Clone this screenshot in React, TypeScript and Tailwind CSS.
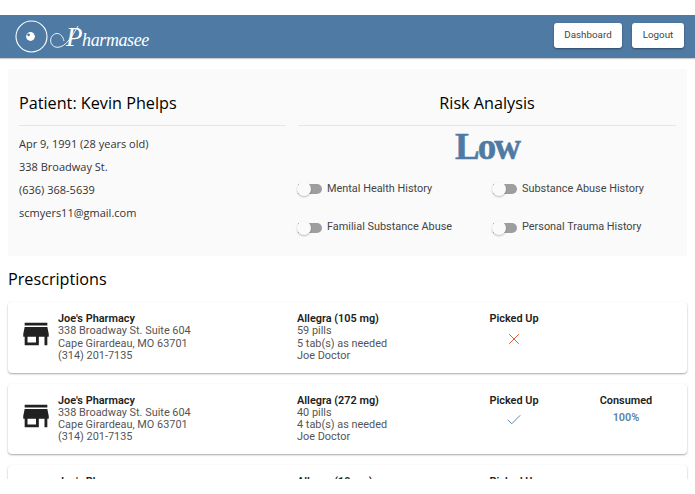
import React from 'react';
import { Check, X } from 'lucide-react';

const StoreIcon = () => (
  <svg viewBox="0 0 24 24" className="w-[34px] h-[34px] shrink-0 text-[#212121]" fill="currentColor">
    <path d="M20 4H4v2h16V4zm1 10v-2l-1-5H4l-1 5v2h1v6h10v-6h4v6h2v-6h1zm-9 4H6v-4h6v4z" />
  </svg>
);

const Logo = () => (
  <div className="flex items-center text-white">
    <svg viewBox="0 0 33 33" className="w-[33px] h-[33px] shrink-0" fill="none" stroke="currentColor">
      <circle cx="16.5" cy="16.5" r="15.5" strokeWidth="1.1" />
      <circle cx="15.5" cy="16.5" r="4.4" fill="currentColor" stroke="none" />
      <circle cx="13.6" cy="14.8" r="1.4" fill="#4f7aa3" stroke="none" />
    </svg>
    <svg viewBox="0 0 33 26" className="w-[33px] h-[26px] ml-[1px] shrink-0" fill="none" stroke="currentColor" strokeWidth="0.9">
      <path d="M29 2C24 11 17 23 9 23.3C3.5 23.5 1.3 19 1.7 16C2 12 5 9.5 8 9.5C12 9.5 14 13 15 17" />
    </svg>
    <span className="font-['Liberation_Serif'] italic text-[18px] leading-none -ml-[16px] mt-[2px] tracking-[-0.4px]">
      <span className="text-[27px]">P</span>harmasee
    </span>
  </div>
);

const Toggle = ({ label }: { label: string }) => (
  <div className="flex items-center">
    <div className="relative w-[24px] h-[10px] rounded-r-full bg-[#9e9e9e]">
      <div className="absolute -left-[1px] -top-[2px] w-[14px] h-[14px] rounded-full bg-[#fafafa] shadow-[0_1px_2px_rgba(0,0,0,0.25)]" />
    </div>
    <span className="ml-[5px] text-[10.9px] text-[#444]">{label}</span>
  </div>
);

type Rx = { drug: string; pills: string; dose: string; picked: boolean; consumed?: string };

const RxCard = ({ drug, pills, dose, picked, consumed }: Rx) => (
  <div className="flex h-[70.5px] shrink-0 items-start rounded-[4px] bg-white shadow-[0_1px_2px_rgba(0,0,0,0.35)] text-[10.9px] leading-[12.3px] text-[#555]">
    <div className="flex w-[289px] pl-[11px] pt-[11px]">
      <div className="mt-[4px]"><StoreIcon /></div>
      <div className="ml-[5px]">
        <div className="font-semibold text-[#212121]">Joe's Pharmacy</div>
        <div>338 Broadway St. Suite 604</div>
        <div>Cape Girardeau, MO 63701</div>
        <div>(314) 201-7135</div>
      </div>
    </div>
    <div className="w-[168px] pt-[11px]">
      <div className="font-semibold text-[#212121]">{drug}</div>
      <div>{pills}</div>
      <div>{dose}</div>
      <div>Joe Doctor</div>
    </div>
    <div className="flex w-[98px] flex-col items-center pt-[11px]">
      <div className="font-semibold text-[#212121]">Picked Up</div>
      {picked
        ? <Check className="mt-[4px] w-[18px] h-[18px] text-[#4f7aa3]" strokeWidth={1.2} />
        : <X className="mt-[5px] w-[18px] h-[18px] text-[#e2592e]" strokeWidth={1.3} />}
    </div>
    {consumed && (
      <div className="ml-[14px] flex w-[98px] flex-col items-center pt-[11px]">
        <div className="font-semibold text-[#212121]">Consumed</div>
        <div className="mt-[5px] font-semibold text-[#5b83a8]">{consumed}</div>
      </div>
    )}
  </div>
);

export default function App() {
  return (
    <div className="h-[494px] overflow-hidden bg-white font-['Roboto',sans-serif]">
      <div className="h-[479px] overflow-hidden pt-[15px]">
        <header className="flex h-[43px] items-center justify-between bg-[#4f7aa3] pl-[15px] pr-[11px] shadow-[0_1px_1px_rgba(0,0,0,0.2)]">
          <Logo />
          <div className="mb-[2px] flex gap-[10px]">
            <button className="h-[25px] w-[68px] rounded-[3px] bg-white text-[9.8px] text-[#444] shadow-[0_1px_2px_rgba(0,0,0,0.4)]">Dashboard</button>
            <button className="h-[25px] w-[52px] rounded-[3px] bg-white text-[9.8px] text-[#444] shadow-[0_1px_2px_rgba(0,0,0,0.4)]">Logout</button>
          </div>
        </header>

        <main className="px-[8px] pt-[11px]">
          <section className="flex h-[187px] gap-[12px] bg-[#fafafa] px-[11px] font-['Open_Sans',sans-serif]">
            <div className="w-[267px]">
              <h2 className="h-[57px] border-b border-[#e6e6e6] pt-[22px] text-[16.2px] font-medium leading-[25px] text-black">Patient: Kevin Phelps</h2>
              <div className="mt-[9px] space-y-[5px] text-[11px] leading-[18px] text-[#333]">
                <p>Apr 9, 1991 (28 years old)</p>
                <p>338 Broadway St.</p>
                <p>(636) 368-5639</p>
                <p>scmyers11@gmail.com</p>
              </div>
            </div>
            <div className="flex-1">
              <h2 className="h-[57px] border-b border-[#e6e6e6] pt-[22px] text-center text-[16.2px] font-medium leading-[25px] text-black">Risk Analysis</h2>
              <div className="mt-[1px] text-center font-['Liberation_Serif',serif] text-[37px] font-bold leading-[40px] tracking-[-2px] text-[#4f7aa3] [-webkit-text-stroke:0.5px_#4f7aa3]">Low</div>
              <div className="mt-[14px] grid grid-cols-[195px_1fr] gap-y-[22px] font-['Roboto',sans-serif]">
                <Toggle label="Mental Health History" />
                <Toggle label="Substance Abuse History" />
                <Toggle label="Familial Substance Abuse" />
                <Toggle label="Personal Trauma History" />
              </div>
            </div>
          </section>

          <h2 className="mt-[11px] font-['Open_Sans',sans-serif] text-[16.2px] font-medium leading-[25px] text-black">Prescriptions</h2>

          <div className="mt-[10px] flex flex-col gap-[11px]">
            <RxCard drug="Allegra (105 mg)" pills="59 pills" dose="5 tab(s) as needed" picked={false} />
            <RxCard drug="Allegra (272 mg)" pills="40 pills" dose="4 tab(s) as needed" picked consumed="100%" />
            <RxCard drug="Allegra (10 mg)" pills="30 pills" dose="2 tab(s) as needed" picked />
          </div>
        </main>
      </div>
    </div>
  );
}
